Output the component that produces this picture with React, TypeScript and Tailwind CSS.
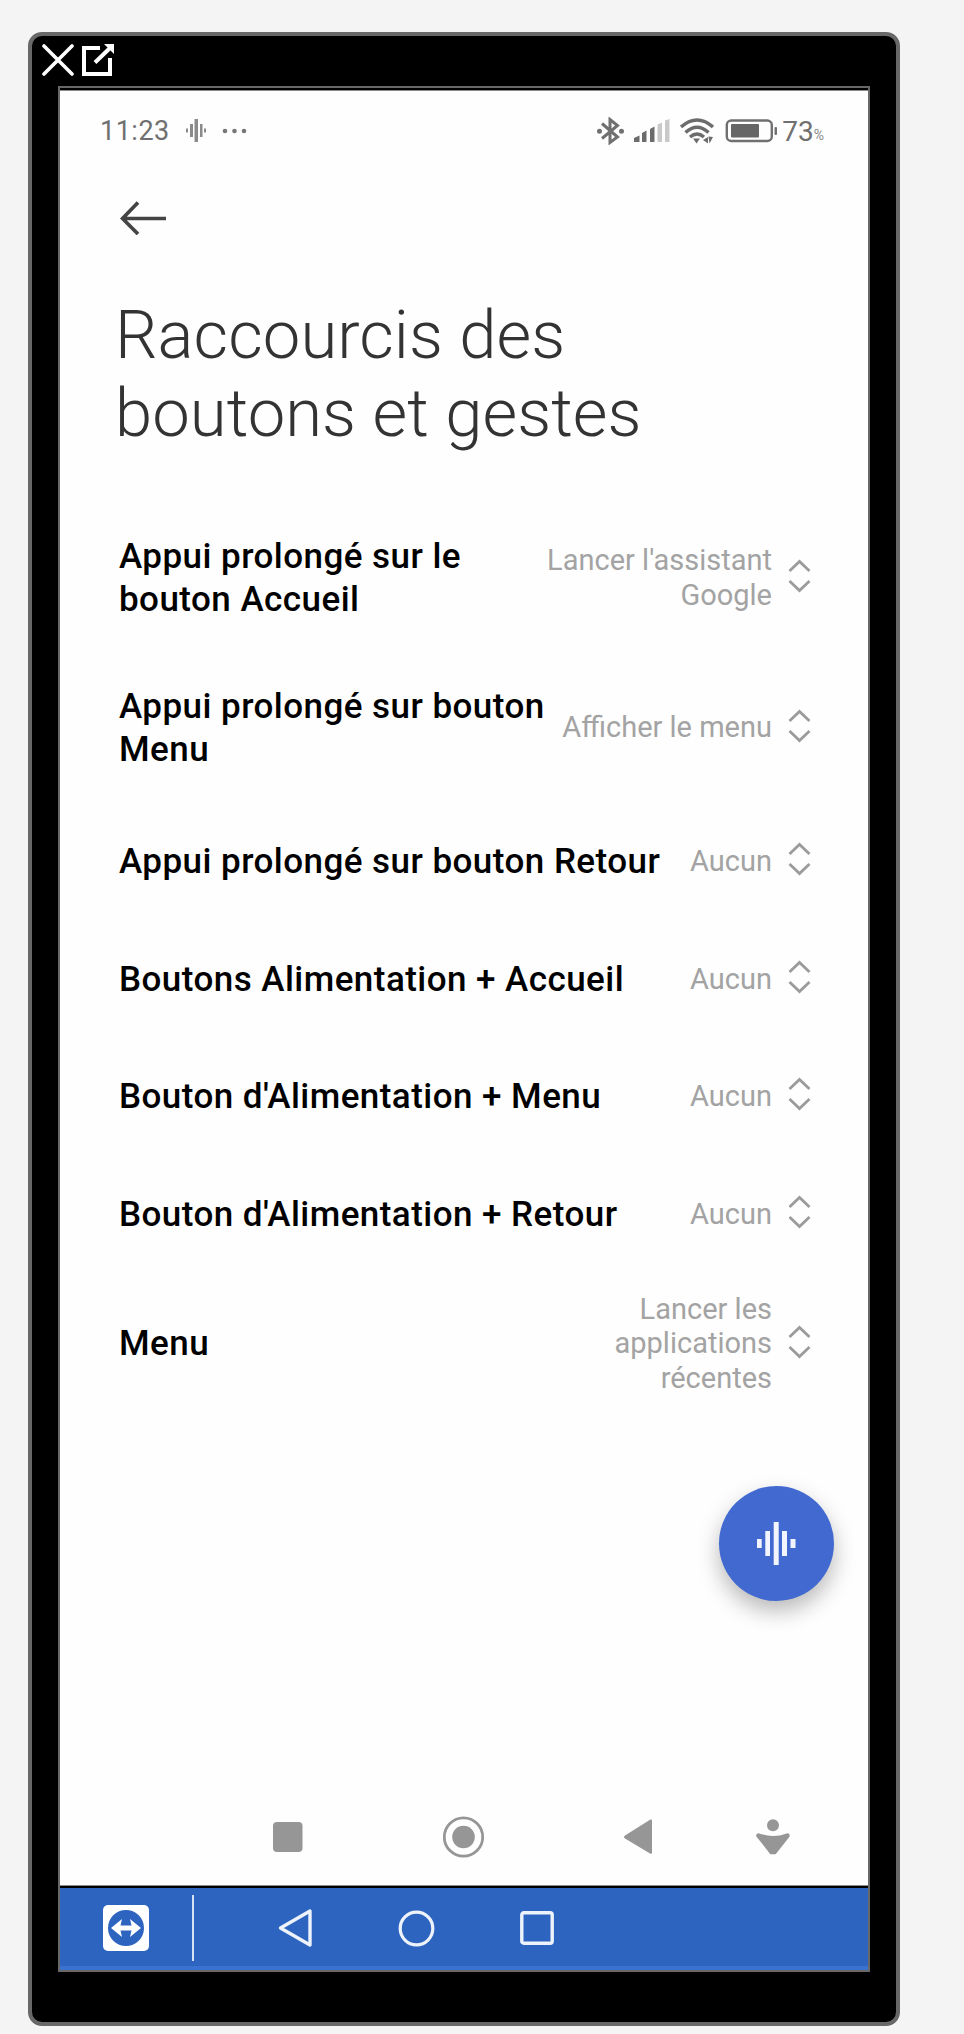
interface Shortcut {
  label: string[];
  value: string[];
  height: string;
}

const SHORTCUTS: Shortcut[] = [
  { label: ['Appui prolongé sur le', 'bouton Accueil'], value: ["Lancer l'assistant", 'Google'], height: 'h-[150px]' },
  { label: ['Appui prolongé sur bouton', 'Menu'], value: ['Afficher le menu'], height: 'h-[150px]' },
  { label: ['Appui prolongé sur bouton Retour'], value: ['Aucun'], height: 'h-[117.5px]' },
  { label: ['Boutons Alimentation + Accueil'], value: ['Aucun'], height: 'h-[117.5px]' },
  { label: ["Bouton d'Alimentation + Menu"], value: ['Aucun'], height: 'h-[117.5px]' },
  { label: ["Bouton d'Alimentation + Retour"], value: ['Aucun'], height: 'h-[117.5px]' },
  { label: ['Menu'], value: ['Lancer les', 'applications', 'récentes'], height: 'h-[142px]' },
];

function WindowControls() {
  return (
    <div className="flex h-[50px] gap-2 pl-[10px] pt-2">
      <svg width="32" height="32" viewBox="0 0 32 32" stroke="#fff" strokeWidth="3.6" strokeLinecap="round">
        <path d="M2 2L30 30M30 2L2 30" />
      </svg>
      <svg width="32" height="32" viewBox="0 0 32 32" fill="none" stroke="#fff" strokeWidth="4">
        <path d="M18 4H2V30H28V14" />
        <path d="M13 18.5L28 4" />
        <path d="M22 0H32V10Z" fill="#fff" stroke="none" />
      </svg>
    </div>
  );
}

function StatusBar() {
  return (
    <div className="flex h-[42px] items-center pl-[40px] pr-[44px] pt-[1px] text-[#707070]">
      <span className="w-[86px] pt-[2px] text-[27px] leading-none tracking-[0.5px]">11:23</span>
      <svg width="20" height="23" viewBox="0 0 20 23" fill="#8a8a8a">
        <rect x="0" y="9.5" width="2" height="4" />
        <rect x="4" y="5" width="3" height="13" />
        <rect x="8.5" y="0" width="3.5" height="23" />
        <rect x="14" y="5" width="2.5" height="13" />
        <rect x="18" y="9.5" width="2" height="4" />
      </svg>
      <svg className="ml-4" width="26" height="6" viewBox="0 0 26 6" fill="#777">
        <circle cx="3" cy="3" r="2.3" />
        <circle cx="12.5" cy="3" r="2.3" />
        <circle cx="22" cy="3" r="2.3" />
      </svg>
      <div className="ml-auto flex items-center">
        <svg width="27" height="28" viewBox="0 0 27 28" fill="none" stroke="#707070" strokeWidth="3">
          <path d="M5 6.5L20.5 20L13 25.5V2.5L20.5 8.5L5 21.5" />
          <circle cx="2.5" cy="14.3" r="1" fill="#707070" />
          <circle cx="24.5" cy="14.3" r="1" fill="#707070" />
        </svg>
        <svg className="ml-[10px]" width="36" height="23" viewBox="0 0 36 23" fill="#6c6c6c">
          <path d="M0 19L5.5 16.5V23H0Z" />
          <path d="M8 14L12.5 11.5V23H8Z" />
          <path d="M16 10L20.5 7.5V23H16Z" />
          <path d="M23.5 5.5L28 3.5V23H23.5Z" fill="#c9c9c9" />
          <path d="M31 1.5L35.5 0V23H31Z" fill="#c9c9c9" />
        </svg>
        <svg className="ml-[10px]" width="34" height="26" viewBox="0 0 34 26" fill="none" stroke="#6c6c6c" strokeWidth="3.5">
          <path d="M1 9Q17 -5 33 9" />
          <path d="M5.5 14.5Q17 4 28.5 14.5" />
          <path d="M10 19Q17 13 24 19" />
          <path d="M13 20.5H20L16.5 25.5Z" fill="#6c6c6c" stroke="none" />
          <path d="M23 22L28 19V25.5Z" fill="#6c6c6c" stroke="none" />
          <path d="M28.5 18.5L33 19L29.5 25.5Z" fill="#6c6c6c" stroke="none" />
        </svg>
        <svg className="ml-[11px]" width="52" height="24" viewBox="0 0 52 24" fill="none">
          <rect x="1.8" y="1.5" width="45" height="20.5" rx="4.5" stroke="#707070" strokeWidth="2.4" />
          <rect x="6" y="5" width="28" height="13.5" rx="1" fill="#666" />
          <rect x="49.5" y="8" width="2.5" height="8" rx="1" fill="#707070" />
        </svg>
        <span className="ml-[5px] pt-[2px] text-[28px] leading-none">73</span>
        <span className="mt-[9px] text-[14px] leading-none text-[#888]">%</span>
      </div>
    </div>
  );
}

function Selector() {
  return (
    <svg className="ml-[16px] mt-[1px] shrink-0" width="23" height="34" viewBox="0 0 23 34" fill="none" stroke="#9b9b9b" strokeWidth="2.8">
      <path d="M1.5 12L11.5 2.5L21.5 12" />
      <path d="M1.5 22L11.5 31.5L21.5 22" />
    </svg>
  );
}

function ShortcutRow({ label, value, height }: Shortcut) {
  return (
    <div className={`flex items-center ${height}`}>
      <div className="pt-[7px] text-[35px] font-medium leading-[42.5px] tracking-[0.45px] text-black">
        {label.map((line) => (
          <div key={line} className="whitespace-nowrap">{line}</div>
        ))}
      </div>
      <div className="ml-auto pt-[5px] text-right text-[29px] leading-[34.5px] text-[#a3a3a3]">
        {value.map((line) => (
          <div key={line} className="whitespace-nowrap">{line}</div>
        ))}
      </div>
      <Selector />
    </div>
  );
}

function SystemNav() {
  return (
    <div className="flex h-[96px] items-center pl-[213px]">
      <svg width="30" height="30" viewBox="0 0 30 30" fill="#969696">
        <rect width="29.5" height="30" rx="4" />
      </svg>
      <svg className="ml-[140px]" width="42" height="42" viewBox="0 0 42 42">
        <circle cx="20.5" cy="21" r="19.2" fill="none" stroke="#969696" strokeWidth="2.8" />
        <circle cx="20.5" cy="21" r="11.3" fill="#969696" />
      </svg>
      <svg className="ml-[139px]" width="28" height="36" viewBox="0 0 28 36" fill="#969696">
        <path d="M1 16.5L26 .8Q28 0 28 2V33.5Q28 35.5 26 34.5L1 19.5Q-1 18 1 16.5Z" />
      </svg>
      <svg className="ml-[104px]" width="34" height="36" viewBox="0 0 34 36" fill="#969696">
        <circle cx="17" cy="6.3" r="6" />
        <path
          d="M2.5 16.5Q17 22 31.5 16.5L18.5 33H15.5Z"
          stroke="#969696"
          strokeWidth="4.5"
          strokeLinejoin="round"
        />
      </svg>
    </div>
  );
}

function RemoteBar() {
  return (
    <div className="flex h-[82px] items-center border-b-4 border-[#3a72d2] bg-[#2c64c0] pl-[43px] pt-[2px]">
      <svg width="46" height="46" viewBox="0 0 46 46">
        <rect width="46" height="46" rx="5" fill="#fff" />
        <circle cx="23" cy="23" r="18" fill="#2c64c0" />
        <path d="M8 23L19 14L17.5 20.5H28.5L27 14L38 23L27 32L28.5 25.5H17.5L19 32Z" fill="#fff" />
      </svg>
      <div className="ml-[43px] h-[66px] w-[2px] bg-[#d5e0f2]" />
      <svg className="ml-[84px]" width="35" height="40" viewBox="0 0 35 40" fill="none" stroke="#eef3fb" strokeWidth="3.4" strokeLinejoin="round">
        <path d="M2.5 20L32 3V37Z" />
      </svg>
      <svg className="ml-[85px]" width="37" height="37" viewBox="0 0 37 37" fill="none" stroke="#eef3fb" strokeWidth="3.2">
        <circle cx="18.5" cy="18.5" r="16.3" />
      </svg>
      <svg className="ml-[85px]" width="34" height="34" viewBox="0 0 34 34" fill="none" stroke="#eef3fb" strokeWidth="3.4">
        <rect x="1.8" y="1.8" width="30.4" height="30.4" rx="2" />
      </svg>
    </div>
  );
}

export default function App() {
  return (
    <div className="h-[2034px] w-[964px] bg-[#f4f4f4] pl-[28px] pt-[32px] font-['Roboto','Liberation_Sans',sans-serif]">
      <div className="h-[1994px] w-[872px] rounded-[14px] border-4 border-[#686868] bg-black">
        <WindowControls />
        <div className="ml-[26px] h-[1886px] w-[812px] border-2 border-[#686868] bg-black pt-[2px]">
          <div className="relative flex h-[1796px] flex-col border-y border-[#8a8a8a] bg-[#fefefe]">
            <div className="h-[18px]" />
            <StatusBar />
            <svg className="ml-[60px] mt-[50px]" width="47" height="34" viewBox="0 0 47 34" fill="none" stroke="#444" strokeWidth="3.7">
              <path d="M18 1.5L2.5 17.5L18 33M2.5 17.5H46" />
            </svg>
            <h1 className="ml-[55px] mt-[61px] text-[67px] font-light leading-[78px] tracking-[0.05px] text-[#333]">
              Raccourcis des
              <br />
              boutons et gestes
            </h1>
            <div className="ml-[59px] mt-[48px] w-[692px]">
              {SHORTCUTS.map((s, i) => (
                <ShortcutRow key={i} {...s} />
              ))}
            </div>
            <button className="absolute left-[659px] top-[1395px] flex size-[115px] items-center justify-center rounded-full bg-[#4169d0] shadow-[0_10px_22px_rgba(0,0,0,0.28)]">
              <svg width="39" height="43" viewBox="0 0 39 43" fill="#f2f5fd">
                <rect x="0" y="17" width="4.7" height="9" />
                <rect x="8.3" y="9" width="4.7" height="25" />
                <rect x="16.7" y="0" width="5" height="43" />
                <rect x="25" y="9" width="5" height="25" />
                <rect x="33.5" y="17" width="5" height="9" />
              </svg>
            </button>
            <div className="mt-auto">
              <SystemNav />
            </div>
          </div>
          <div className="h-[2px]" />
          <RemoteBar />
        </div>
      </div>
    </div>
  );
}
